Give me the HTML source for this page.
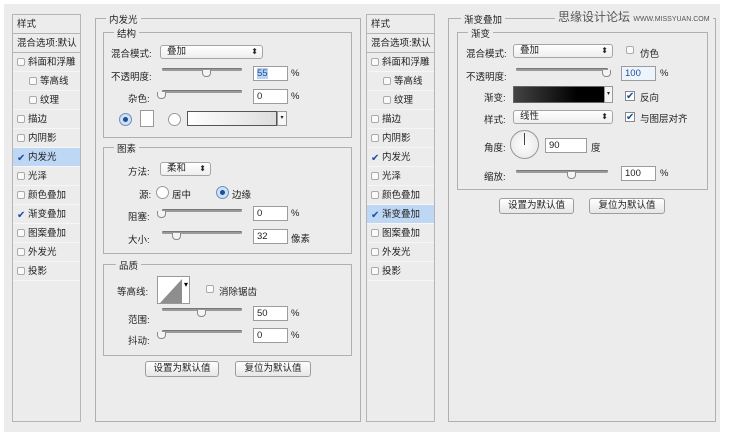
<!DOCTYPE html>
<html><head><meta charset="utf-8"><style>
*{margin:0;padding:0;box-sizing:border-box}
body{width:732px;height:437px;background:#fff;position:relative;overflow:hidden;font-family:"Liberation Sans","Noto Sans CJK SC",sans-serif;font-size:9.5px;color:#222}
.a{position:absolute}
.bg{left:4px;top:4px;width:716px;height:428px;background:#ececec}
.list{background:#ececec;border:1px solid #b5b5b5}
.row{position:absolute;left:0;width:100%;height:19px;line-height:19px;padding-left:4px;border-bottom:1px solid #f6f6f6;white-space:nowrap}
.cb{display:inline-block;width:8px;height:8px;border:1px solid #aaa;background:#fafafa;border-radius:2px;vertical-align:-1px;margin-right:3px}
.ck{display:inline-block;width:9px;height:9px;vertical-align:-1px;margin-right:2px;color:#1a4fa0;font-size:10px;line-height:9px}
.sel{background:#bdd7f5}
.fs{border:1px solid #b0b0b0}
.lg{position:absolute;top:-7px;background:#ececec;padding:0 3px;font-size:9.5px}
.inp{position:absolute;background:#fff;border:1px solid #9c9c9c;height:15px;line-height:13px;padding-left:3px;font-size:9.5px}
.sld{position:absolute;height:3px;background:#9a9a9a;border-radius:2px;box-shadow:inset 0 1px 0 #777}
.th{position:absolute;width:9px;height:7px;border:1px solid #888;border-top:none;background:#f4f4f4;border-radius:0 0 4px 4px}
.sel2{position:absolute;height:14px;border:1px solid #a5a5a5;border-radius:3px;background:linear-gradient(#fff,#eee);padding-left:6px;line-height:12px}
.sel2:after{content:"⬍";position:absolute;right:4px;top:0;font-size:8px}
.btn{position:absolute;height:16px;border:1px solid #9d9d9d;border-radius:3px;background:linear-gradient(#fff,#e6e6e6);text-align:center;line-height:14px}
.rad{position:absolute;width:13px;height:13px;border-radius:50%;border:1px solid #9a9a9a;background:#fff}
.rad.on:after{content:"";position:absolute;left:3px;top:3px;width:5px;height:5px;border-radius:50%;background:#1d4e97}
.rad.on{background:#cfe0f5;border-color:#6b8fc0}
.t{position:absolute;white-space:nowrap}
</style></head><body>
<div class="a bg"></div>

<!-- left list -->
<div class="a list" style="left:12px;top:14px;width:69px;height:408px">
<div class="row" style="top:0;border-bottom:1px solid #b5b5b5">样式</div>
<div class="row" style="top:19px;border-bottom:1px solid #b5b5b5">混合选项:默认</div>
<div class="row" style="top:38px"><span class="cb"></span>斜面和浮雕</div>
<div class="row" style="top:57px;padding-left:16px"><span class="cb"></span>等高线</div>
<div class="row" style="top:76px;padding-left:16px"><span class="cb"></span>纹理</div>
<div class="row" style="top:95px"><span class="cb"></span>描边</div>
<div class="row" style="top:114px"><span class="cb"></span>内阴影</div>
<div class="row sel" style="top:133px"><span class="ck">✔</span>内发光</div>
<div class="row" style="top:152px"><span class="cb"></span>光泽</div>
<div class="row" style="top:171px"><span class="cb"></span>颜色叠加</div>
<div class="row" style="top:190px"><span class="ck">✔</span>渐变叠加</div>
<div class="row" style="top:209px"><span class="cb"></span>图案叠加</div>
<div class="row" style="top:228px"><span class="cb"></span>外发光</div>
<div class="row" style="top:247px"><span class="cb"></span>投影</div>
</div>

<!-- main 内发光 -->
<div class="a fs" style="left:95px;top:18px;width:266px;height:404px"><span class="lg" style="left:10px">内发光</span></div>
<div class="a fs" style="left:103px;top:32px;width:249px;height:106px"><span class="lg" style="left:10px">结构</span></div>
<span class="t" style="left:111px;top:46px">混合模式:</span>
<div class="sel2" style="left:160px;top:45px;width:103px">叠加</div>
<span class="t" style="left:111px;top:69px">不透明度:</span>
<div class="sld" style="left:162px;top:68px;width:80px"></div><div class="th" style="left:202px;top:70px"></div>
<div class="inp" style="left:253px;top:66px;width:35px;color:#1c4f9c"><span style="background:#b8d3f2">55</span></div><span class="t" style="left:291px;top:68px">%</span>
<span class="t" style="left:128px;top:91px">杂色:</span>
<div class="sld" style="left:162px;top:90px;width:80px"></div><div class="th" style="left:157px;top:92px"></div>
<div class="inp" style="left:253px;top:89px;width:35px">0</div><span class="t" style="left:291px;top:91px">%</span>
<div class="rad on" style="left:119px;top:113px"></div>
<div class="a" style="left:140px;top:110px;width:14px;height:17px;background:#fff;border:1px solid #999"></div>
<div class="rad" style="left:168px;top:113px"></div>
<div class="a" style="left:187px;top:111px;width:90px;height:15px;border:1px solid #555;background:linear-gradient(90deg,#fff,#ddd)"></div>
<div class="a" style="left:277px;top:111px;width:10px;height:15px;border:1px solid #999;background:#f6f6f6;font-size:6px;text-align:center;line-height:13px">▾</div>

<div class="a fs" style="left:103px;top:147px;width:249px;height:107px"><span class="lg" style="left:10px">图素</span></div>
<span class="t" style="left:128px;top:164px">方法:</span>
<div class="sel2" style="left:160px;top:162px;width:51px">柔和</div>
<span class="t" style="left:139px;top:187px">源:</span>
<div class="rad" style="left:156px;top:186px"></div><span class="t" style="left:172px;top:187px">居中</span>
<div class="rad on" style="left:216px;top:186px"></div><span class="t" style="left:232px;top:187px">边缘</span>
<span class="t" style="left:128px;top:209px">阻塞:</span>
<div class="sld" style="left:162px;top:209px;width:80px"></div><div class="th" style="left:157px;top:211px"></div>
<div class="inp" style="left:253px;top:206px;width:35px">0</div><span class="t" style="left:291px;top:208px">%</span>
<span class="t" style="left:128px;top:232px">大小:</span>
<div class="sld" style="left:162px;top:231px;width:80px"></div><div class="th" style="left:172px;top:233px"></div>
<div class="inp" style="left:253px;top:229px;width:35px">32</div><span class="t" style="left:291px;top:231px">像素</span>

<div class="a fs" style="left:103px;top:264px;width:249px;height:92px"><span class="lg" style="left:12px">品质</span></div>
<span class="t" style="left:117px;top:284px">等高线:</span>
<div class="a" style="left:157px;top:276px;width:33px;height:28px;border:1px solid #999;background:#fff;overflow:hidden">
<svg width="33" height="28"><polygon points="2,26 24,2 24,26" fill="#8e8e8e"/><text x="26" y="10" font-size="8">▾</text></svg></div>
<span class="cb a" style="left:206px;top:285px"></span><span class="t" style="left:219px;top:284px">消除锯齿</span>
<span class="t" style="left:128px;top:312px">范围:</span>
<div class="sld" style="left:162px;top:308px;width:80px"></div><div class="th" style="left:197px;top:310px"></div>
<div class="inp" style="left:253px;top:306px;width:35px">50</div><span class="t" style="left:291px;top:308px">%</span>
<span class="t" style="left:128px;top:333px">抖动:</span>
<div class="sld" style="left:162px;top:330px;width:80px"></div><div class="th" style="left:157px;top:332px"></div>
<div class="inp" style="left:253px;top:328px;width:35px">0</div><span class="t" style="left:291px;top:330px">%</span>
<div class="btn" style="left:145px;top:361px;width:74px">设置为默认值</div>
<div class="btn" style="left:235px;top:361px;width:76px">复位为默认值</div>

<!-- right list -->
<div class="a list" style="left:366px;top:14px;width:69px;height:408px">
<div class="row" style="top:0;border-bottom:1px solid #b5b5b5">样式</div>
<div class="row" style="top:19px;border-bottom:1px solid #b5b5b5">混合选项:默认</div>
<div class="row" style="top:38px"><span class="cb"></span>斜面和浮雕</div>
<div class="row" style="top:57px;padding-left:16px"><span class="cb"></span>等高线</div>
<div class="row" style="top:76px;padding-left:16px"><span class="cb"></span>纹理</div>
<div class="row" style="top:95px"><span class="cb"></span>描边</div>
<div class="row" style="top:114px"><span class="cb"></span>内阴影</div>
<div class="row" style="top:133px"><span class="ck">✔</span>内发光</div>
<div class="row" style="top:152px"><span class="cb"></span>光泽</div>
<div class="row" style="top:171px"><span class="cb"></span>颜色叠加</div>
<div class="row sel" style="top:190px"><span class="ck">✔</span>渐变叠加</div>
<div class="row" style="top:209px"><span class="cb"></span>图案叠加</div>
<div class="row" style="top:228px"><span class="cb"></span>外发光</div>
<div class="row" style="top:247px"><span class="cb"></span>投影</div>
</div>

<!-- right 渐变叠加 -->
<div class="a fs" style="left:448px;top:18px;width:268px;height:404px"><span class="lg" style="left:12px">渐变叠加</span></div>
<span class="t" style="left:555px;top:8px;background:#ececec;padding:0 3px;font-size:12px;color:#555">思缘设计论坛 <span style="font-size:7px">WWW.MISSYUAN.COM</span></span>
<div class="a fs" style="left:457px;top:32px;width:251px;height:158px"><span class="lg" style="left:10px">渐变</span></div>
<span class="t" style="left:466px;top:46px">混合模式:</span>
<div class="sel2" style="left:513px;top:44px;width:100px">叠加</div>
<span class="cb a" style="left:626px;top:46px"></span><span class="t" style="left:640px;top:46px">仿色</span>
<span class="t" style="left:466px;top:69px">不透明度:</span>
<div class="sld" style="left:516px;top:68px;width:92px"></div><div class="th" style="left:602px;top:70px"></div>
<div class="inp" style="left:621px;top:66px;width:35px;color:#1c4f9c;background:#eef4fc">100</div><span class="t" style="left:660px;top:68px">%</span>
<span class="t" style="left:484px;top:90px">渐变:</span>
<div class="a" style="left:513px;top:86px;width:92px;height:17px;border:1px solid #666;background:linear-gradient(90deg,#444,#000 70%)"></div>
<div class="a" style="left:604px;top:86px;width:9px;height:17px;border:1px solid #999;background:#f4f4f4;font-size:6px;text-align:center;line-height:15px">▾</div>
<span class="ck a" style="left:625px;top:91px;border:1px solid #888;background:#fff;width:10px;height:10px">✔</span><span class="t" style="left:640px;top:90px">反向</span>
<span class="t" style="left:484px;top:112px">样式:</span>
<div class="sel2" style="left:513px;top:110px;width:100px">线性</div>
<span class="ck a" style="left:625px;top:112px;border:1px solid #888;background:#fff;width:10px;height:10px">✔</span><span class="t" style="left:640px;top:111px">与图层对齐</span>
<span class="t" style="left:484px;top:140px">角度:</span>
<div class="a" style="left:510px;top:130px;width:29px;height:29px;border-radius:50%;border:1px solid #999;background:radial-gradient(#fff,#e4e4e4)"><div class="a" style="left:13px;top:2px;width:1px;height:12px;background:#444"></div></div>
<div class="inp" style="left:545px;top:138px;width:42px">90</div><span class="t" style="left:591px;top:140px">度</span>
<span class="t" style="left:484px;top:169px">缩放:</span>
<div class="sld" style="left:516px;top:170px;width:92px"></div><div class="th" style="left:567px;top:172px"></div>
<div class="inp" style="left:621px;top:166px;width:35px">100</div><span class="t" style="left:660px;top:168px">%</span>
<div class="btn" style="left:499px;top:198px;width:75px">设置为默认值</div>
<div class="btn" style="left:589px;top:198px;width:76px">复位为默认值</div>
</body></html>
